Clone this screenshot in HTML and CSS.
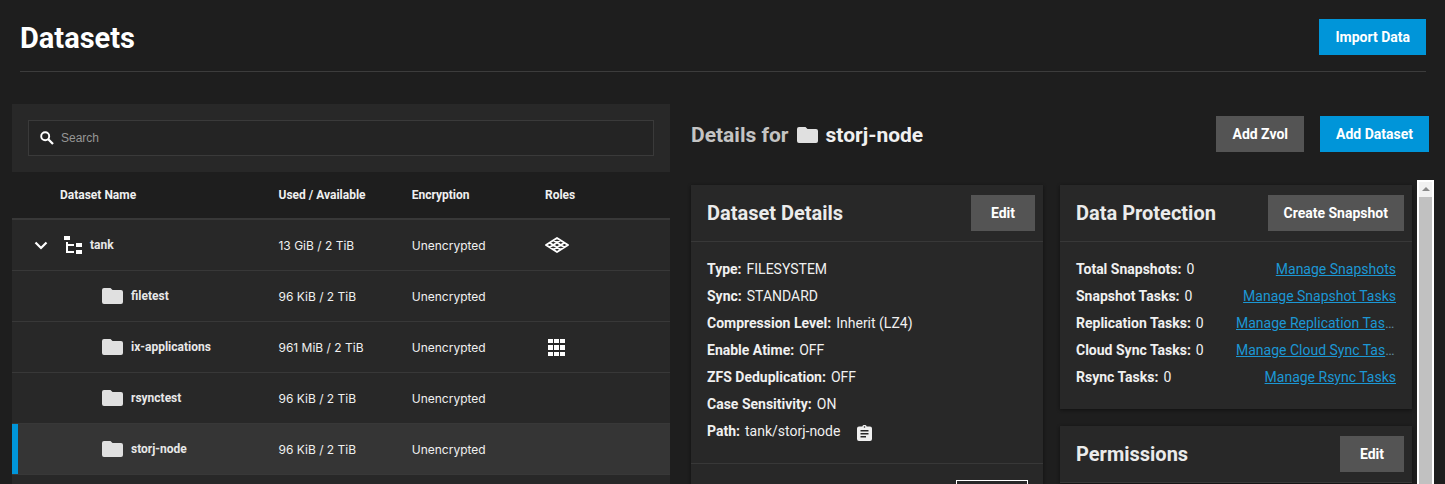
FILE: index.html
```html
<!DOCTYPE html>
<html lang="en">
<head>
<meta charset="utf-8">
<title>Datasets</title>
<link rel="stylesheet" href="styles.css">
</head>
<body>
<svg class="sprite" aria-hidden="true">
  <symbol id="folder" viewBox="0 0 21 16"><path d="M2 0h6.500l2 2H19a2 2 0 0 1 2 2v10a2 2 0 0 1-2 2H2a2 2 0 0 1-2-2V2a2 2 0 0 1 2-2z"/></symbol>
  <symbol id="tree" viewBox="0 0 18 18"><path d="M0 0h6v4H0zM12 7h6v4h-6zM12 14h6v4h-6zM2 6h2v2h6v2H4v5h6v2H2z"/></symbol>
  <symbol id="pool" viewBox="0 0 24 16"><path d="M12 1 23 8 12 15 1 8zM8.300 3.300l11 7M4.700 5.700l11 7M15.700 3.300l-11 7M19.300 5.700l-11 7" fill="none" stroke="currentColor" stroke-width="1.900" stroke-linejoin="round"/></symbol>
  <symbol id="apps" viewBox="0 0 18 17"><path d="M0 0h5v4H0zM6 0h5v4H6zM12 0h5v4h-5zM0 6h5v5H0zM6 6h5v5H6zM12 6h5v5h-5zM0 13h5v4H0zM6 13h5v4H6zM12 13h5v4h-5z"/></symbol>
  <symbol id="chevron" viewBox="0 0 14 9"><path d="M1.500 1.500 7 7l5.500-5.500" fill="none" stroke="currentColor" stroke-width="2.200"/></symbol>
  <symbol id="search" viewBox="0 0 14 14"><circle cx="5.200" cy="5.200" r="4" fill="none" stroke="currentColor" stroke-width="1.900"/><path d="m8 8 5 5" stroke="currentColor" stroke-width="2.300"/></symbol>
  <symbol id="clipboard" viewBox="0 0 15 16"><path fill-rule="evenodd" d="M2 1.500h3.300a2.300 2.300 0 0 1 4.400 0H13a2 2 0 0 1 2 2V14a2 2 0 0 1-2 2H2a2 2 0 0 1-2-2V3.500a2 2 0 0 1 2-2zM7.500 1.200a.8.8 0 1 0 0 1.600.8.8 0 0 0 0-1.600zM3.500 5v1.500h8V5zM3.500 8v1.500h8V8zM3.500 11v1.500h5.500V11z"/></symbol>
</svg>

<header class="page-header">
  <h1 class="page-title">Datasets</h1>
  <button class="btn btn-primary" type="button">Import Data</button>
</header>

<main class="content">
  <section class="tree-panel">
    <div class="search-bar">
      <label class="search-box">
        <svg class="icon-search"><use href="#search"/></svg>
        <input class="search-input" type="text" placeholder="Search" aria-label="Search">
      </label>
    </div>
    <table class="tree">
      <thead>
        <tr><th class="col-name">Dataset Name</th><th class="col-mid">Used / Available</th><th class="col-mid">Encryption</th><th>Roles</th></tr>
      </thead>
      <tbody>
        <tr><td><div class="name root"><button class="toggle" type="button" aria-label="Collapse tank"><svg class="icon-chevron"><use href="#chevron"/></svg></button><svg class="icon-tree"><use href="#tree"/></svg><span>tank</span></div></td><td>13 GiB / 2 TiB</td><td>Unencrypted</td><td><svg class="icon-pool"><use href="#pool"/></svg></td></tr>
        <tr><td><div class="name child"><svg class="icon-folder"><use href="#folder"/></svg><span>filetest</span></div></td><td>96 KiB / 2 TiB</td><td>Unencrypted</td><td></td></tr>
        <tr><td><div class="name child"><svg class="icon-folder"><use href="#folder"/></svg><span>ix-applications</span></div></td><td>961 MiB / 2 TiB</td><td>Unencrypted</td><td><svg class="icon-apps"><use href="#apps"/></svg></td></tr>
        <tr><td><div class="name child"><svg class="icon-folder"><use href="#folder"/></svg><span>rsynctest</span></div></td><td>96 KiB / 2 TiB</td><td>Unencrypted</td><td></td></tr>
        <tr class="selected"><td><div class="name child"><svg class="icon-folder"><use href="#folder"/></svg><span>storj-node</span></div></td><td>96 KiB / 2 TiB</td><td>Unencrypted</td><td></td></tr>
      </tbody>
    </table>
  </section>

  <section class="details">
    <div class="details-header">
      <h2 class="details-title"><span class="muted">Details for</span><svg class="icon-folder"><use href="#folder"/></svg><span>storj-node</span></h2>
      <div class="actions">
        <button class="btn" type="button">Add Zvol</button>
        <button class="btn btn-primary" type="button">Add Dataset</button>
      </div>
    </div>
    <div class="details-body">
      <div class="cards">
        <div class="column">
          <article class="card">
            <div class="card-header"><h3 class="card-title">Dataset Details</h3><button class="btn btn-edit" type="button">Edit</button></div>
            <dl class="facts">
              <div class="fact"><dt>Type:</dt><dd>FILESYSTEM</dd></div>
              <div class="fact"><dt>Sync:</dt><dd>STANDARD</dd></div>
              <div class="fact"><dt>Compression Level:</dt><dd>Inherit (LZ4)</dd></div>
              <div class="fact"><dt>Enable Atime:</dt><dd>OFF</dd></div>
              <div class="fact"><dt>ZFS Deduplication:</dt><dd>OFF</dd></div>
              <div class="fact"><dt>Case Sensitivity:</dt><dd>ON</dd></div>
              <div class="fact"><dt>Path:</dt><dd>tank/storj-node</dd><dd class="copy-cell"><button class="copy" type="button" aria-label="Copy path"><svg class="icon-clipboard"><use href="#clipboard"/></svg></button></dd></div>
            </dl>
            <div class="card-footer"><button class="btn-outline" type="button"></button></div>
          </article>
        </div>
        <div class="column">
          <article class="card">
            <div class="card-header"><h3 class="card-title">Data Protection</h3><button class="btn" type="button">Create Snapshot</button></div>
            <dl class="facts">
              <div class="fact"><dt>Total Snapshots:</dt><dd>0</dd><dd class="link-cell"><a class="link" href="#">Manage Snapshots</a></dd></div>
              <div class="fact"><dt>Snapshot Tasks:</dt><dd>0</dd><dd class="link-cell"><a class="link" href="#">Manage Snapshot Tasks</a></dd></div>
              <div class="fact"><dt>Replication Tasks:</dt><dd>0</dd><dd class="link-cell"><a class="link" href="#">Manage Replication Tasks</a></dd></div>
              <div class="fact"><dt>Cloud Sync Tasks:</dt><dd>0</dd><dd class="link-cell"><a class="link" href="#">Manage Cloud Sync Tasks</a></dd></div>
              <div class="fact"><dt>Rsync Tasks:</dt><dd>0</dd><dd class="link-cell"><a class="link" href="#">Manage Rsync Tasks</a></dd></div>
            </dl>
          </article>
          <article class="card">
            <div class="card-header"><h3 class="card-title">Permissions</h3><button class="btn btn-edit" type="button">Edit</button></div>
          </article>
        </div>
      </div>
      <div class="scrollbar" aria-hidden="true">
        <svg class="scroll-arrow" viewBox="0 0 8 4"><path d="M4 0l4 4H0z"/></svg>
        <div class="scroll-thumb"></div>
      </div>
    </div>
  </section>
</main>
</body>
</html>
```
FILE: styles.css
```css
* { box-sizing: border-box; }

body {
  display: flex;
  flex-direction: column;
  height: 100vh;
  margin: 0;
  overflow: hidden;
  background: #1e1e1e;
  color: #f0f0f0;
  font-family: Roboto, "Liberation Sans", sans-serif;
  font-size: 14px;
}

h1, h2, h3, dl, dd { margin: 0; }
svg { display: block; flex: none; fill: currentColor; }
.sprite { position: absolute; width: 0; height: 0; }

.page-header {
  display: flex;
  align-items: center;
  justify-content: space-between;
  flex: none;
  margin: 0 19px 0 20px;
  padding: 19px 0 16px;
  border-bottom: 1px solid #3c3c3c;
}
.page-title {
  padding-top: 2px;
  color: #fff;
  font-size: 29px;
  font-weight: 700;
  line-height: 34px;
}

.btn {
  height: 36px;
  padding: 0 16px;
  border: 0;
  background: #545454;
  color: #fff;
  font-family: Roboto, sans-serif;
  font-size: 14px;
  font-weight: 700;
  white-space: nowrap;
}
.btn-primary { background: #0095d9; }
.btn-edit { width: 64px; }

.content {
  display: grid;
  grid-template-columns: minmax(0, 658fr) minmax(0, 743fr);
  gap: 21px;
  flex: 1;
  min-height: 0;
  padding: 32px 11px 0 12px;
}

.tree-panel {
  min-height: 0;
  overflow: hidden;
  background: #282828;
}
.search-bar { padding: 16px; }
.search-box {
  display: flex;
  align-items: center;
  gap: 7px;
  height: 36px;
  padding: 0 11px;
  border: 1px solid #3a3a3a;
  background: #242424;
}
.icon-search { width: 14px; height: 14px; color: #fff; }
.search-input {
  flex: 1;
  min-width: 0;
  padding: 0;
  border: 0;
  outline: 0;
  background: transparent;
  color: #fff;
  font-family: "Liberation Sans", sans-serif;
  font-size: 12px;
}
.search-input::placeholder { color: #969696; opacity: 1; }

.tree {
  width: 100%;
  border-collapse: separate;
  border-spacing: 0;
  table-layout: fixed;
  font-family: Inter, sans-serif;
  font-size: 12px;
}
.tree th {
  height: 48px;
  padding: 0;
  border-bottom: 2px solid #383838;
  background: #1e1e1e;
  font-family: Roboto, sans-serif;
  font-size: 12px;
  font-weight: 700;
  text-align: left;
}
.tree .col-name { width: 40.500%; padding-left: 48px; }
.col-mid { width: 20.250%; }
.tree td {
  height: 51px;
  padding: 0;
  border-bottom: 1px solid #383838;
}
.name {
  display: flex;
  align-items: center;
  gap: 8px;
  color: #e8e8e8;
  font-family: Roboto, sans-serif;
  font-size: 12px;
  font-weight: 700;
}
.root { padding-left: 22px; }
.child { padding-left: 90px; }
.toggle {
  margin-right: 8px;
  padding: 0;
  border: 0;
  background: transparent;
  color: #fff;
}
.icon-chevron { width: 14px; height: 9px; }
.icon-tree { width: 18px; height: 18px; color: #fff; }
.icon-folder { width: 21px; height: 16px; color: #e0e0e0; }
.icon-pool { width: 24px; height: 16px; color: #fff; }
.icon-apps { width: 18px; height: 17px; margin-left: 3px; color: #fff; }
.selected td { background: #353535; }
.selected td:first-child { box-shadow: inset 6px 0 #0095d9; }

.details {
  display: flex;
  flex-direction: column;
  min-width: 0;
  min-height: 0;
}
.details-header {
  display: flex;
  align-items: center;
  justify-content: space-between;
  flex: none;
  padding: 12px 5px 28px 0;
}
.details-title {
  display: flex;
  align-items: center;
  gap: 8px;
  padding-top: 2px;
  font-size: 21px;
  font-weight: 700;
}
.muted { color: #c4c4c4; }
.actions { display: flex; gap: 16px; }

.details-body {
  display: flex;
  gap: 5px;
  flex: 1;
  min-height: 0;
}
.cards {
  display: grid;
  grid-template-columns: minmax(0, 1fr) minmax(0, 1fr);
  gap: 17px;
  flex: 1;
  min-width: 0;
  padding-top: 5px;
}
.column {
  display: flex;
  flex-direction: column;
  gap: 17px;
}
.card {
  background: #282828;
  box-shadow: 0 1px 3px #111;
}
.card-header {
  display: flex;
  align-items: center;
  justify-content: space-between;
  padding: 10px 8px 10px 16px;
  border-bottom: 1px solid #383838;
}
.card-title {
  color: #ebebeb;
  font-size: 20px;
  font-weight: 700;
}
.facts { padding: 14px 16px 18px; }
.fact {
  display: flex;
  gap: 5px;
  line-height: 27px;
  white-space: nowrap;
}
.fact dt { font-weight: 700; }
.link-cell {
  width: 160px;
  margin-left: auto;
  overflow: hidden;
  color: #5f8ba0;
  text-align: right;
  text-overflow: ellipsis;
}
.link { color: #1c97d4; }
.copy-cell {
  display: flex;
  align-items: center;
  padding: 2px 0 0 12px;
}
.copy {
  padding: 0;
  border: 0;
  background: transparent;
  color: #f0f0f0;
}
.icon-clipboard { width: 15px; height: 16px; }
.card-footer {
  display: flex;
  justify-content: flex-end;
  padding: 16px 15px;
  border-top: 1px solid #383838;
}
.btn-outline {
  width: 72px;
  height: 36px;
  border: 1px solid #fff;
  background: transparent;
}

.scrollbar {
  display: flex;
  flex-direction: column;
  align-items: stretch;
  flex: none;
  width: 17px;
  border: solid #fff;
  border-width: 2px 2px 0;
  background: #f1f1f1;
}
.scroll-arrow {
  align-self: center;
  width: 8px;
  height: 4px;
  margin: 5px 0 6px;
  fill: #8a8a8a;
}
.scroll-thumb { flex: 1; background: #c1c1c1; }
```
